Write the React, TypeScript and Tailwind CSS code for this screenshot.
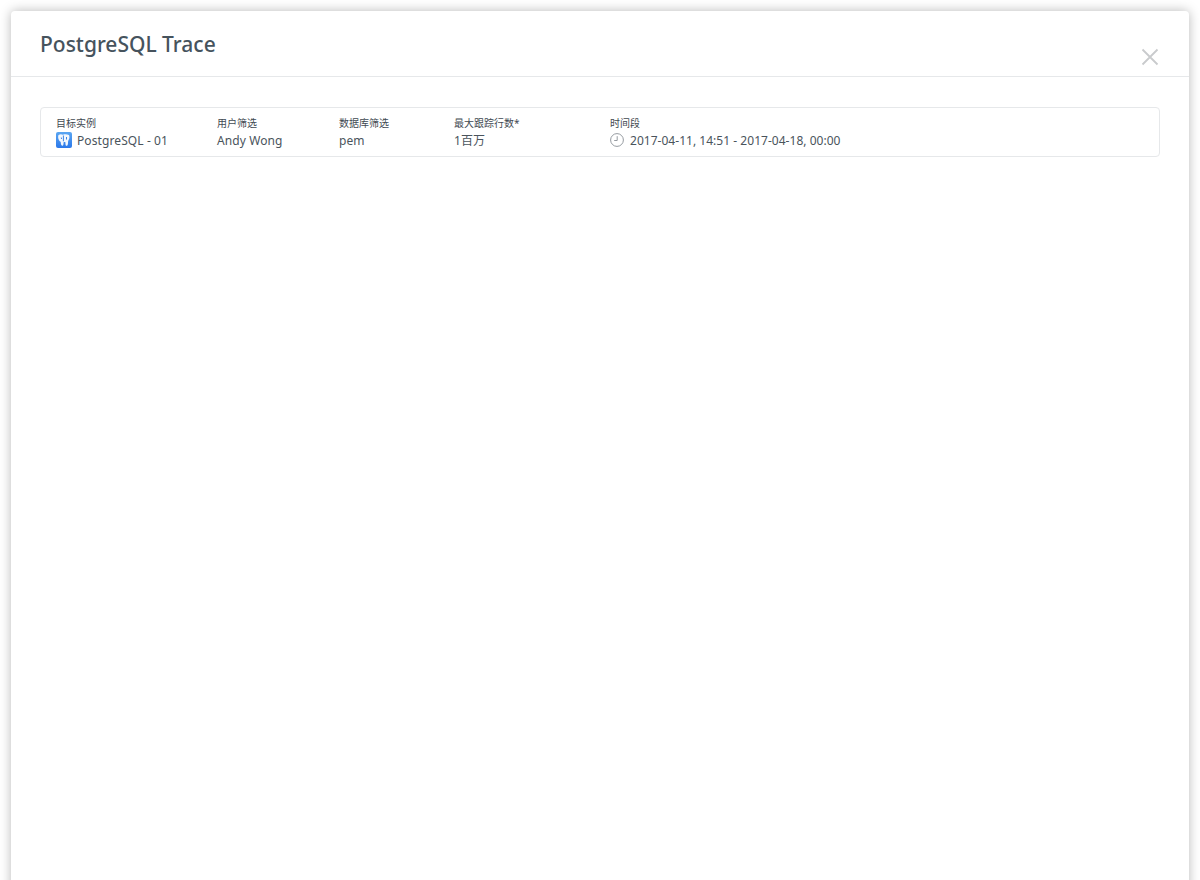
import React from 'react';

const fields = [
  { label: '用户筛选', value: 'Andy Wong', width: 'w-[122px]' },
  { label: '数据库筛选', value: 'pem', width: 'w-[115px]' },
  { label: '最大跟踪行数*', value: '1百万', width: 'w-[156px]' },
];

const PgIcon = () => (
  <svg width="16" height="16" viewBox="0 0 16 16" className="shrink-0 -translate-y-px">
    <defs>
      <linearGradient id="pg" x1="0" y1="0" x2="0" y2="1">
        <stop offset="0" stopColor="#5aa6f2" />
        <stop offset="1" stopColor="#2b78ea" />
      </linearGradient>
    </defs>
    <rect width="16" height="16" rx="2" fill="url(#pg)" />
    <path
      d="M2.500 3c1.400-1 3.200-1 4.500-.2 1.400-.6 4-.7 6 .3.800 1.800.4 3.800-.4 5-.4.700-.6 1.300-.6 2.300 0 1.200-.2 2.900-1 3.300-.9.300-1.400-.4-1.500-1.500l-.2-2.200H7.700l-.3 2.400c-.2 1.100-.8 1.500-1.600 1.200-.8-.5-1-2.500-1.100-3.900-1-.2-1.700-1.100-2.100-2.400C2 5.800 2 4.300 2.500 3z"
      fill="#f2f7fd"
    />
    <path d="M7.400 3.500v5.800M5.300 5.500l.2 1.500M10.500 5v2.500" stroke="#3b84e6" strokeWidth="1" fill="none" />
  </svg>
);

const ClockIcon = () => (
  <svg width="14" height="14" viewBox="0 0 14 14" fill="none" className="shrink-0 -translate-y-px">
    <circle cx="7" cy="7" r="6.400" stroke="#8a9096" strokeWidth="0.900" />
    <path d="M7.200 3.200V7.500H4.200" stroke="#8a9096" strokeWidth="0.900" />
  </svg>
);

const App = () => {
  return (
    <div className="h-[880px] w-full overflow-hidden bg-white px-[11px] pt-[11px] font-['Noto_Sans','Noto_Sans_CJK_SC',sans-serif]">
      <div className="h-[900px] rounded-[4px] bg-white shadow-[0_0_12px_rgba(0,0,0,0.28)]">
        <div className="relative h-[66px] border-b border-[#e6e8ea] pl-[29px] pt-[18px]">
          <h1 className="text-[21px] leading-[30px] font-medium text-[#46535d]">PostgreSQL Trace</h1>
          <svg width="18" height="18" viewBox="0 0 18 18" className="absolute right-[30px] top-[37px]">
            <path d="M1.500 1.500L16.500 16.500M16.500 1.500L1.500 16.500" stroke="#c9cbcd" strokeWidth="1.800" />
          </svg>
        </div>
        <div className="px-[29px] pt-[30px]">
          <div className="flex h-[50px] rounded-[4px] border border-[#e6e8ea] pl-[15px] pt-[8px]">
            <div className="w-[161px]">
              <div className="text-[10px] leading-[14px] text-[#3f4a52]">目标实例</div>
              <div className="mt-[2px] flex items-center gap-[5px] text-[12px] leading-[18px] tracking-[0.1px] text-[#4a545c]">
                <PgIcon />
                PostgreSQL - 01
              </div>
            </div>
            {fields.map((field) => (
              <div key={field.label} className={field.width}>
                <div className="text-[10px] leading-[14px] text-[#3f4a52]">{field.label}</div>
                <div className="mt-[2px] text-[12px] leading-[18px] tracking-[0.1px] text-[#4a545c]">{field.value}</div>
              </div>
            ))}
            <div>
              <div className="text-[10px] leading-[14px] text-[#3f4a52]">时间段</div>
              <div className="mt-[2px] flex items-center gap-[6px] text-[12px] leading-[18px] tracking-[0.03px] text-[#4a545c]">
                <ClockIcon />
                2017-04-11, 14:51 - 2017-04-18, 00:00
              </div>
            </div>
          </div>
        </div>
      </div>
    </div>
  );
};

export default App;
